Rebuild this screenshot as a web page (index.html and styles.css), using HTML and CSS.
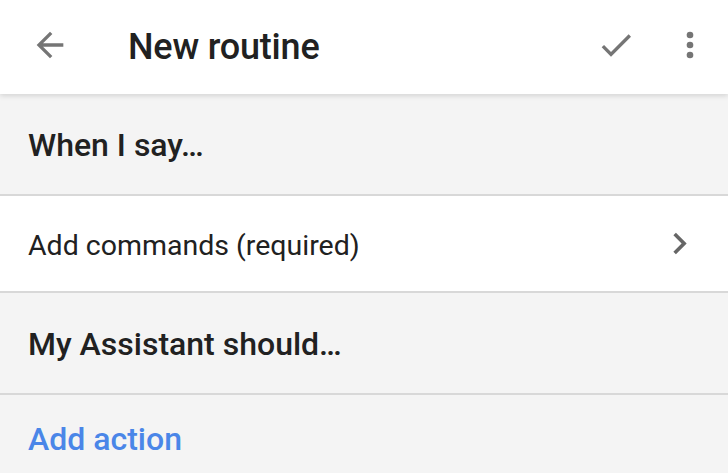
FILE: index.html
```html
<!DOCTYPE html>
<html>
<head>
<meta charset="utf-8">
<link rel="stylesheet" href="styles.css">
</head>
<body>
<div class="app">
  <header class="topbar">
    <svg class="icon back" viewBox="0 0 24 24"><path d="M20 11H7.83l5.59-5.59L12 4l-8 8 8 8 1.41-1.41L7.83 13H20v-2z"/></svg>
    <h1 class="title">New routine</h1>
    <div class="actions">
      <svg class="icon check" viewBox="0 0 24 24"><path d="M9 16.17L4.83 12l-1.42 1.41L9 19 21 7l-1.41-1.41z"/></svg>
      <svg class="icon more" viewBox="0 0 24 24"><circle cx="12" cy="6" r="2"/><circle cx="12" cy="12" r="2"/><circle cx="12" cy="18" r="2"/></svg>
    </div>
  </header>
  <section class="section-head">When I say…</section>
  <div class="row">
    <span class="row-text">Add commands (required)</span>
    <svg class="chev" viewBox="0 0 24 24"><path d="M10 6L8.59 7.41 13.17 12l-4.58 4.59L10 18l6-6z"/></svg>
  </div>
  <section class="section-head">My Assistant should…</section>
  <div class="link-row">Add action</div>
</div>
</body>
</html>
```
FILE: styles.css
```css
* { box-sizing: border-box; }
html, body { margin: 0; padding: 0; }
body {
  width: 728px;
  height: 473px;
  overflow: hidden;
  background: #f4f4f4;
  font-family: Roboto, "Noto Sans", sans-serif;
  color: #212121;
}
.app { display: flex; flex-direction: column; }
.topbar {
  position: relative;
  z-index: 1;
  height: 94px;
  background: #fff;
  display: flex;
  align-items: center;
  padding: 0 18px 4px 30px;
  box-shadow: 0 2px 5px rgba(0,0,0,0.13);
}
.icon { width: 40px; height: 40px; fill: #757575; flex: none; }
.title {
  margin: 0 0 0 58px;
  padding-top: 4px;
  font-size: 36px;
  font-weight: 500;
  color: #212121;
  flex: 1;
  letter-spacing: -0.2px;
}
.actions { display: flex; align-items: center; gap: 34px; }
.section-head {
  height: 102px;
  display: flex;
  align-items: center;
  padding: 2px 0 0 28px;
  font-size: 32px;
  font-weight: 500;
  border-bottom: 2px solid #d8d8d8;
  background: #f4f4f4;
}
.row {
  height: 97px;
  background: #fff;
  display: flex;
  align-items: center;
  justify-content: space-between;
  padding: 0 27px 0 28px;
  border-bottom: 2px solid #d8d8d8;
}
.row-text { font-size: 28.5px; color: #212121; padding-top: 4px; }
.chev { width: 43px; height: 43px; fill: #666; }
.link-row {
  height: 88px;
  display: flex;
  align-items: center;
  padding-left: 28px;
  font-size: 32px;
  font-weight: 500;
  color: #4a86e8;
}
```
